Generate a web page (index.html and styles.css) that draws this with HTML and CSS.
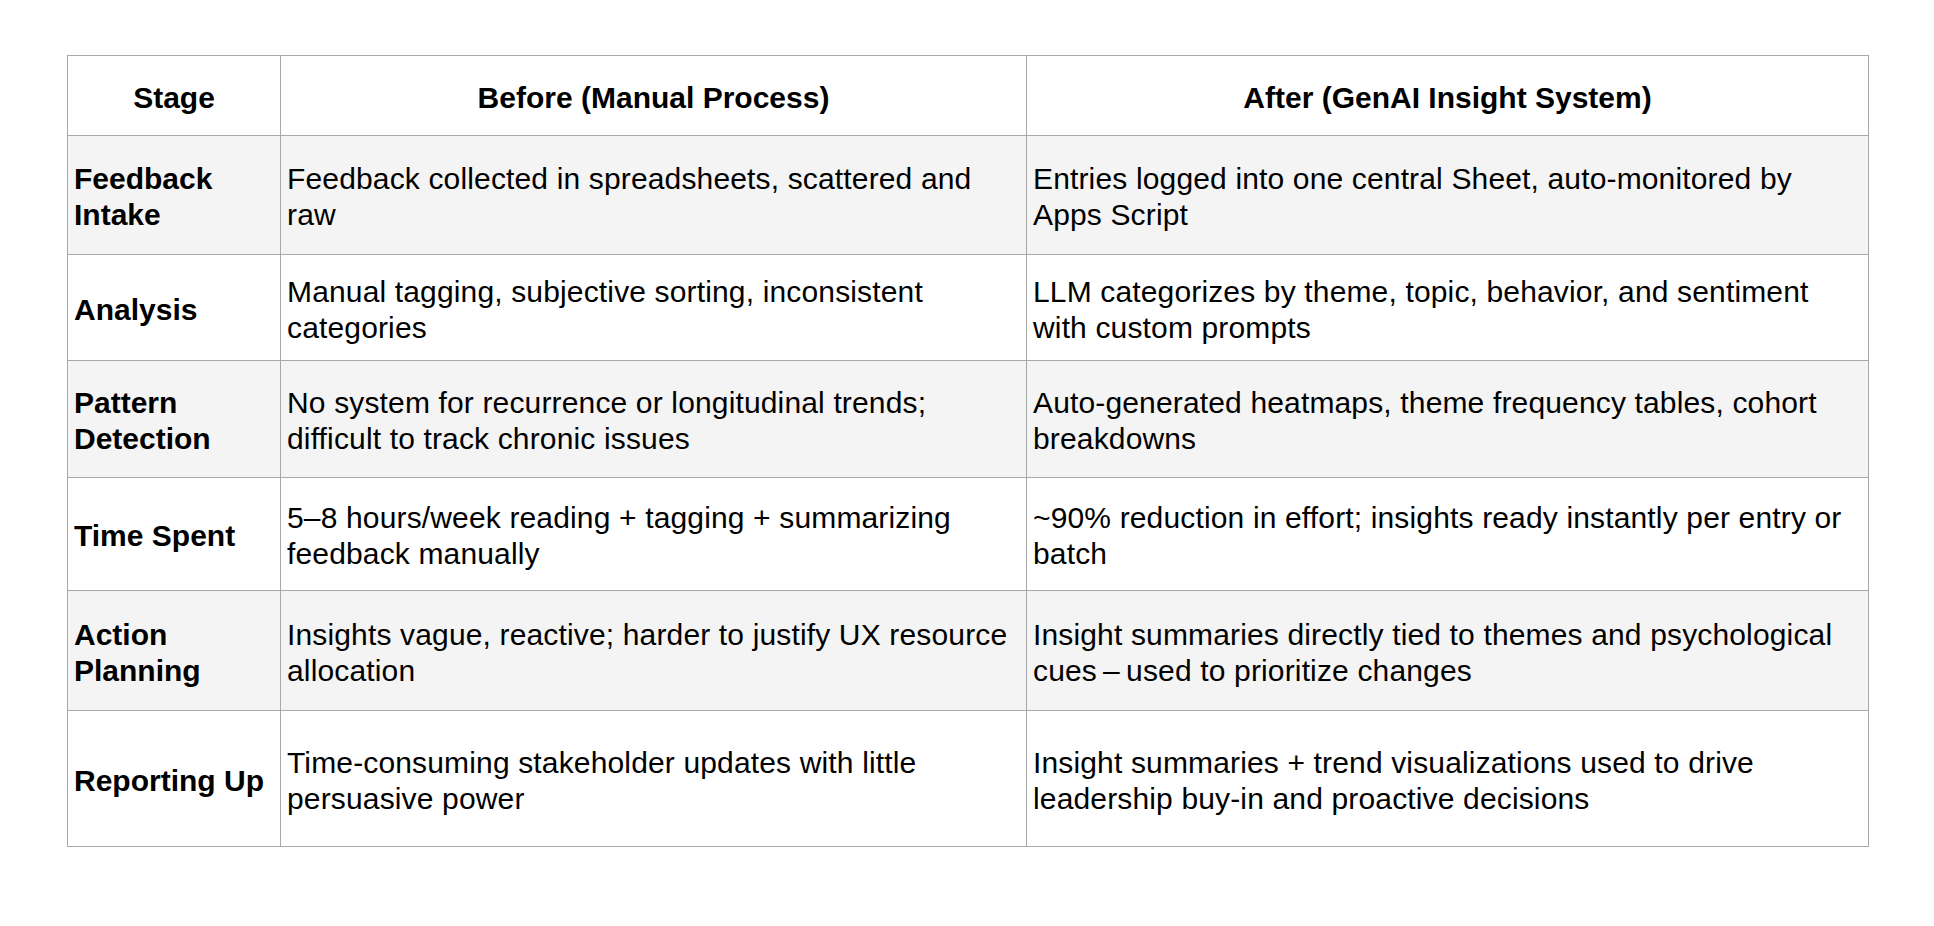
FILE: index.html
```html
<!DOCTYPE html>
<html lang="en">
<head>
<meta charset="utf-8">
<title>Before / After comparison</title>
<link rel="stylesheet" href="styles.css">
</head>
<body>
<div class="page">
  <table class="compare">
    <colgroup>
      <col class="col-stage">
      <col class="col-before">
      <col class="col-after">
    </colgroup>
    <thead>
      <tr>
        <th>Stage</th>
        <th>Before (Manual Process)</th>
        <th>After (GenAI Insight System)</th>
      </tr>
    </thead>
    <tbody>
      <tr class="r1">
        <td class="stage">Feedback Intake</td>
        <td>Feedback collected in spreadsheets, scattered and raw</td>
        <td>Entries logged into one central Sheet, auto-monitored by Apps Script</td>
      </tr>
      <tr class="r2">
        <td class="stage">Analysis</td>
        <td>Manual tagging, subjective sorting, inconsistent categories</td>
        <td>LLM categorizes by theme, topic, behavior, and sentiment with custom prompts</td>
      </tr>
      <tr class="r3">
        <td class="stage">Pattern Detection</td>
        <td>No system for recurrence or longitudinal trends; difficult to track chronic issues</td>
        <td>Auto-generated heatmaps, theme frequency tables, cohort breakdowns</td>
      </tr>
      <tr class="r4">
        <td class="stage">Time Spent</td>
        <td>5–8 hours/week reading + tagging + summarizing feedback manually</td>
        <td>~90% reduction in effort; insights ready instantly per entry or batch</td>
      </tr>
      <tr class="r5">
        <td class="stage">Action Planning</td>
        <td>Insights vague, reactive; harder to justify UX resource allocation</td>
        <td>Insight summaries directly tied to themes and psychological cues&#8201;–&#8201;used to prioritize changes</td>
      </tr>
      <tr class="r6">
        <td class="stage">Reporting Up</td>
        <td>Time-consuming stakeholder updates with little persuasive power</td>
        <td>Insight summaries + trend visualizations used to drive leadership buy-in and proactive decisions</td>
      </tr>
    </tbody>
  </table>
</div>
</body>
</html>
```

FILE: styles.css
```css
html, body {
  margin: 0;
  padding: 0;
  background: #ffffff;
}

.page {
  padding: 55px 0 0 67px;
}

.compare {
  border-collapse: collapse;
  width: 1801px;
  table-layout: fixed;
  font-family: "Liberation Sans", Arial, Helvetica, sans-serif;
  font-size: 30px;
  line-height: 36px;
  color: #000;
}

.col-stage { width: 213px; }
.col-before { width: 746px; }
.col-after { width: 842px; }

.compare th,
.compare td {
  border: 1px solid #a8a8a8;
  padding: 4px 12px 0 6px;
  vertical-align: middle;
  text-align: left;
  font-weight: normal;
}

.compare td {
  letter-spacing: 0.15px;
}

.compare td.stage {
  font-weight: bold;
  letter-spacing: 0;
}

.compare th {
  text-align: center;
  font-weight: bold;
  padding: 4px 6px 0 6px;
}

.compare tbody tr:nth-child(odd) {
  background: #f4f4f4;
}

.compare thead tr { height: 80px; }
.r1 { height: 119px; }
.r2 { height: 106px; }
.r3 { height: 117px; }
.r4 { height: 113px; }
.r5 { height: 120px; }
.r6 { height: 136px; }
```
